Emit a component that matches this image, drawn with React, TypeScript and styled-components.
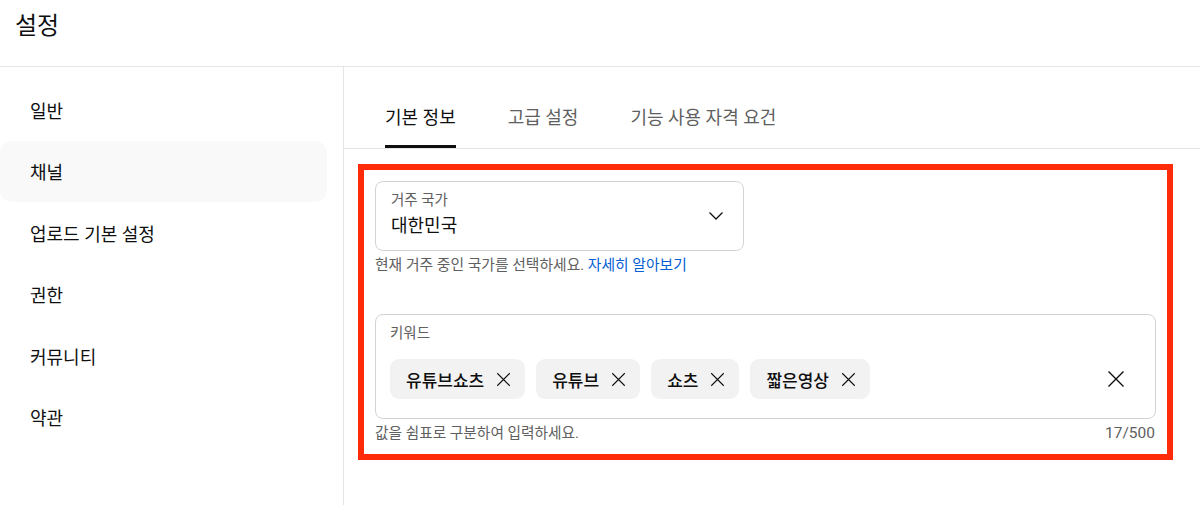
import React from "react";
import styled, { createGlobalStyle } from "styled-components";

const Global = createGlobalStyle`
  html, body { margin: 0; padding: 0; background: #fff; }
  body {
    font-family: Roboto, "Noto Sans CJK KR", "Noto Sans", sans-serif;
    color: #0f0f0f;
    -webkit-font-smoothing: antialiased;
  }
  * { box-sizing: border-box; }
`;

const Page = styled.div`
  width: 1200px;
  height: 505px;
  display: flex;
  flex-direction: column;
  overflow: hidden;
`;

const Header = styled.header`
  height: 67px;
  flex: none;
  border-bottom: 1px solid #e5e5e5;
  padding: 8px 0 0 15px;
`;

const Title = styled.h1`
  margin: 0;
  font-size: 24px;
  line-height: 36px;
  font-weight: 400;
`;

const Body = styled.div`
  flex: 1;
  display: flex;
  min-height: 0;
`;

const Sidebar = styled.nav`
  width: 344px;
  flex: none;
  border-right: 1px solid #e5e5e5;
  padding-top: 12px;
  display: flex;
  flex-direction: column;
`;

const NavItem = styled.div<{ $active?: boolean }>`
  width: 327px;
  height: 61.5px;
  display: flex;
  align-items: center;
  padding-left: 30px;
  font-size: 18px;
  border-radius: 12px;
  background: ${(p) => (p.$active ? "#f9f9f9" : "transparent")};
`;

const Main = styled.main`
  flex: 1;
  display: flex;
  flex-direction: column;
`;

const TabBar = styled.div`
  height: 82px;
  border-bottom: 1px solid #e5e5e5;
  display: flex;
  gap: 52px;
  padding-left: 41px;
`;

const Tab = styled.div<{ $active?: boolean }>`
  position: relative;
  height: 81px;
  padding-top: 17px;
  display: flex;
  align-items: center;
  font-size: 18px;
  color: ${(p) => (p.$active ? "#0f0f0f" : "#606060")};
  &::after {
    content: "";
    display: ${(p) => (p.$active ? "block" : "none")};
    position: absolute;
    left: 0;
    right: 0;
    bottom: 0;
    height: 3px;
    background: #0f0f0f;
  }
`;

const Content = styled.div`
  padding: 15px 0 0 14px;
`;

const Highlight = styled.section`
  width: 815px;
  border: 6px solid #ff2a0a;
  padding: 11px;
  display: flex;
  flex-direction: column;
`;

const SelectBox = styled.div`
  width: 369px;
  height: 70px;
  border: 1px solid #d3d3d3;
  border-radius: 8px;
  padding: 11px 0 0 15px;
  display: flex;
  align-items: flex-start;
`;

const FieldText = styled.div`
  flex: 1;
  display: flex;
  flex-direction: column;
`;

const Label = styled.div`
  font-size: 14.5px;
  line-height: 16px;
  color: #606060;
`;

const Value = styled.div`
  font-size: 18px;
  line-height: 24px;
  margin-top: 5px;
`;

const Chevron = styled.div`
  width: 24px;
  height: 24px;
  margin: 11px 15px 0 0;
  display: flex;
`;

const Helper = styled.div`
  margin-top: 4px;
  font-size: 14.8px;
  line-height: 20px;
  color: #606060;
`;

const Link = styled.a`
  color: #065fd4;
  text-decoration: none;
`;

const KeywordBox = styled.div`
  margin-top: 39px;
  height: 105px;
  border: 1px solid #d3d3d3;
  border-radius: 8px;
  padding: 11px 0 0 14px;
  display: flex;
  flex-direction: column;
`;

const ChipRow = styled.div`
  margin-top: 17px;
  display: flex;
  align-items: center;
  gap: 11px;
  padding-right: 30px;
`;

const Chip = styled.div`
  height: 40px;
  display: flex;
  align-items: center;
  gap: 12px;
  padding: 0 14px 0 16px;
  border-radius: 9px;
  background: #f2f2f2;
  font-size: 17px;
  font-weight: 500;
`;

const Spacer = styled.div`
  flex: 1;
`;

const BottomRow = styled.div`
  margin-top: 4px;
  display: flex;
  justify-content: space-between;
  font-size: 14.7px;
  line-height: 20px;
  color: #606060;
`;

const Counter = styled.span`
  font-size: 15.5px;
  padding-right: 1px;
`;

const XIcon = ({ size, stroke = 1.3 }: { size: number; stroke?: number }) => (
  <svg width={size} height={size} viewBox="0 0 24 24" fill="none">
    <path d="M2 2L22 22M22 2L2 22" stroke="#0f0f0f" strokeWidth={stroke * (24 / size)} />
  </svg>
);

const keywords = ["유튜브쇼츠", "유튜브", "쇼츠", "짧은영상"];

export default function App() {
  return (
    <Page>
      <Global />
      <Header>
        <Title>설정</Title>
      </Header>
      <Body>
        <Sidebar>
          <NavItem>일반</NavItem>
          <NavItem $active>채널</NavItem>
          <NavItem>업로드 기본 설정</NavItem>
          <NavItem>권한</NavItem>
          <NavItem>커뮤니티</NavItem>
          <NavItem>약관</NavItem>
        </Sidebar>
        <Main>
          <TabBar>
            <Tab $active>기본 정보</Tab>
            <Tab>고급 설정</Tab>
            <Tab>기능 사용 자격 요건</Tab>
          </TabBar>
          <Content>
            <Highlight>
              <SelectBox>
                <FieldText>
                  <Label>거주 국가</Label>
                  <Value>대한민국</Value>
                </FieldText>
                <Chevron>
                  <svg width="24" height="24" viewBox="0 0 24 24" fill="none">
                    <path d="M5.5 8.5L12 15L18.5 8.5" stroke="#0f0f0f" strokeWidth="1.3" />
                  </svg>
                </Chevron>
              </SelectBox>
              <Helper>
                현재 거주 중인 국가를 선택하세요. <Link href="#">자세히 알아보기</Link>
              </Helper>
              <KeywordBox>
                <Label>키워드</Label>
                <ChipRow>
                  {keywords.map((k) => (
                    <Chip key={k}>
                      {k}
                      <XIcon size={15} stroke={1.1} />
                    </Chip>
                  ))}
                  <Spacer />
                  <XIcon size={18} stroke={1.4} />
                </ChipRow>
              </KeywordBox>
              <BottomRow>
                <span>값을 쉼표로 구분하여 입력하세요.</span>
                <Counter>17/500</Counter>
              </BottomRow>
            </Highlight>
          </Content>
        </Main>
      </Body>
    </Page>
  );
}
